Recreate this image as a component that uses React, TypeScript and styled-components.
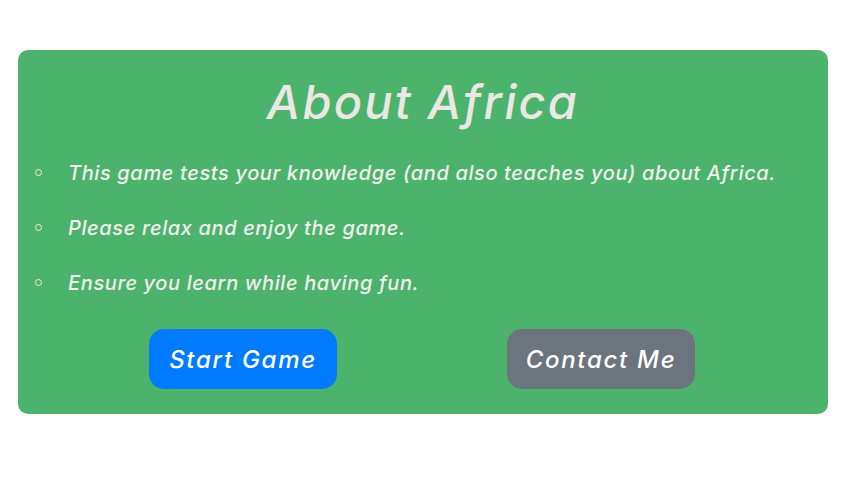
import React from "react";
import styled, { createGlobalStyle } from "styled-components";

const Global = createGlobalStyle`
  html, body { margin: 0; padding: 0; background: #ffffff; }
  body { font-family: Inter, "Liberation Sans", sans-serif; }
`;

const Page = styled.div`
  padding: 50px 0 0 18px;
`;

const Card = styled.section`
  width: 810px;
  height: 364px;
  box-sizing: border-box;
  background: #4bb36b;
  border-radius: 10px;
  padding-top: 22px;
  display: flex;
  flex-direction: column;
`;

const Title = styled.h1`
  margin: 0;
  text-align: center;
  font-family: Inter, sans-serif;
  font-style: italic;
  font-weight: 500;
  font-size: 47px;
  letter-spacing: 2.2px;
  line-height: 60px;
  color: #ebe7e5;
`;

const List = styled.ul`
  list-style: none;
  margin: 14px 0 0;
  padding: 0 0 0 17px;
  color: #f2eeeb;
`;

const Item = styled.li`
  display: flex;
  align-items: center;
  font-family: Inter, sans-serif;
  font-style: italic;
  font-weight: 500;
  font-size: 20px;
  letter-spacing: 0.62px;
  line-height: 55px;
  white-space: nowrap;
`;

const Bullet = styled.span`
  flex: none;
  width: 5px;
  height: 5px;
  border: 1.3px solid #f2eeeb;
  border-radius: 50%;
  margin: 0 26px 3px 0;
`;

const Buttons = styled.div`
  display: flex;
  justify-content: center;
  gap: 170px;
  margin-top: 18px;
  padding-right: 2px;
`;

const Button = styled.button<{ $variant: "primary" | "secondary" }>`
  width: 188px;
  height: 60px;
  padding: 0;
  border: none;
  border-radius: 15px;
  background: ${(p) => (p.$variant === "primary" ? "#007bff" : "#6c757d")};
  color: #ffffff;
  font-family: Inter, sans-serif;
  font-style: italic;
  font-weight: 500;
  font-size: 24px;
  letter-spacing: 1.7px;
  cursor: pointer;
`;

const items = [
  "This game tests your knowledge (and also teaches you) about Africa.",
  "Please relax and enjoy the game.",
  "Ensure you learn while having fun.",
];

export default function App() {
  return (
    <>
      <Global />
      <Page>
        <Card>
          <Title>About Africa</Title>
          <List>
            {items.map((t) => (
              <Item key={t}>
                <Bullet />
                {t}
              </Item>
            ))}
          </List>
          <Buttons>
            <Button $variant="primary">Start Game</Button>
            <Button $variant="secondary">Contact Me</Button>
          </Buttons>
        </Card>
      </Page>
    </>
  );
}
